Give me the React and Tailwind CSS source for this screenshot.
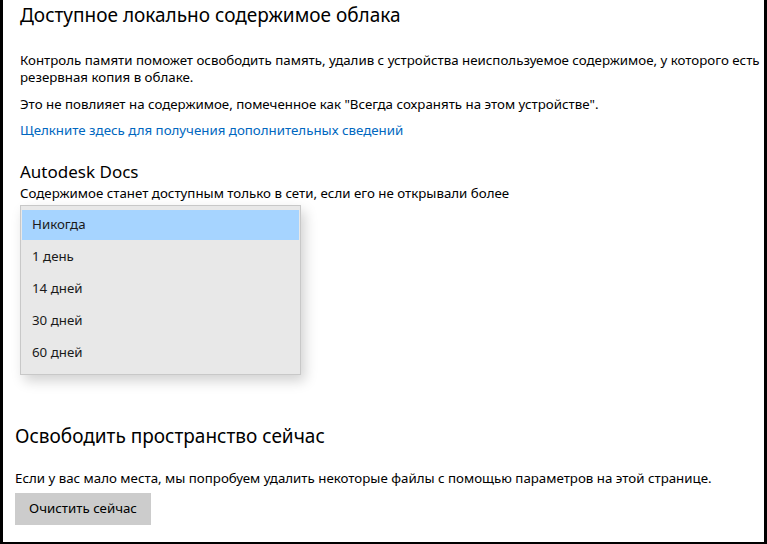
import React from 'react';

const options = ['Никогда', '1 день', '14 дней', '30 дней', '60 дней'];

const App = () => {
  return (
    <div
      className="w-[767px] h-[544px] bg-black overflow-hidden text-[#000]"
      style={{ fontFamily: '"Noto Sans", "Open Sans", sans-serif' }}
    >
      <div className="ml-[3px] mr-[3px] h-[542px] bg-white overflow-hidden">
        {/* Cloud content */}
        <div className="pl-[17px] pt-[2px]">
          <h2 className="text-[19px] leading-[26px]">Доступное локально содержимое облака</h2>
          <p className="mt-[24px] text-[13.3px] leading-[17px] whitespace-nowrap">
            Контроль памяти поможет освободить память, удалив с устройства неиспользуемое содержимое, у которого есть
            <br />
            резервная копия в облаке.
          </p>
          <p className="mt-[10px] text-[13.3px] leading-[17px]">
            Это не повлияет на содержимое, помеченное как "Всегда сохранять на этом устройстве".
          </p>
          <a href="#" className="block mt-[9px] text-[13.3px] leading-[17px] text-[#0067c0]">
            Щелкните здесь для получения дополнительных сведений
          </a>

          <h3 className="mt-[22px] text-[17px] leading-[22px]">Autodesk Docs</h3>
          <p className="mt-[2px] text-[13.3px] leading-[17px]">
            Содержимое станет доступным только в сети, если его не открывали более
          </p>

          <div className="relative h-[221px]">
            {/* Open dropdown */}
            <div className="absolute left-0 top-[3px] w-[281px] border border-[#c8c8c8] bg-[#e8e8e8] py-[4px] shadow-[4px_6px_12px_rgba(0,0,0,0.18)]">
              {options.map((opt, i) => (
                <div
                  key={opt}
                  className={
                    i === 0
                      ? 'mx-px h-[30px] mb-[2px] flex items-center pl-[10px] text-[13.3px] text-[#1a1a1a] bg-[#a6d4ff]'
                      : 'mx-px h-[30px] mb-[2px] flex items-center pl-[10px] text-[13.3px] text-[#1a1a1a]'
                  }
                >
                  {opt}
                </div>
              ))}
            </div>
          </div>
        </div>

        {/* Free space now */}
        <div className="pl-[12px]">
          <h2 className="text-[19px] leading-[26px]">Освободить пространство сейчас</h2>
          <p className="mt-[21px] text-[13.3px] leading-[17px]">
            Если у вас мало места, мы попробуем удалить некоторые файлы с помощью параметров на этой странице.
          </p>
          <button className="mt-[6px] h-[32px] w-[136px] bg-[#cccccc] text-[13.3px]">Очистить сейчас</button>
        </div>
      </div>
    </div>
  );
};

export default App;
